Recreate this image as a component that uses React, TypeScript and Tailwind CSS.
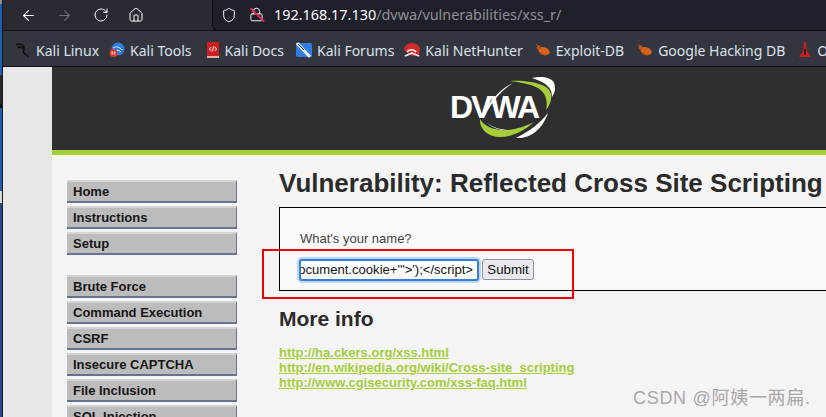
import { ArrowLeft, ArrowRight, RotateCw, Home, Shield, Lock } from 'lucide-react'

const menuTop = ['Home', 'Instructions', 'Setup']
const menuVulns = ['Brute Force', 'Command Execution', 'CSRF', 'Insecure CAPTCHA', 'File Inclusion', 'SQL Injection']

function Bug() {
  return (
    <svg width="16" height="14" viewBox="0 0 16 14" className="shrink-0">
      <ellipse cx="9" cy="8" rx="6" ry="3.6" fill="#d9631e" transform="rotate(20 9 8)" />
      <circle cx="3.5" cy="4.5" r="2" fill="#b9501a" />
      <path d="M1 1l3 3M5 2l-1 2M6 12l1-3M10 13l0-3" stroke="#b9501a" strokeWidth="1" />
    </svg>
  )
}

function Bookmark({ icon, label, gap }: { icon: React.ReactNode; label: string; gap: string }) {
  return (
    <div className={`flex items-center gap-[5px] ${gap}`}>
      {icon}
      <span className="whitespace-nowrap">{label}</span>
    </div>
  )
}

function MenuItem({ label }: { label: string }) {
  return (
    <div className="h-[23px] mb-[3px] bg-[#bcbcbc] border-t-2 border-t-[#d4d4d4] border-b-2 border-b-[#68748f] border-r border-r-[#68748f] pl-[6px] text-[13px] font-bold leading-[19px] text-[#161616]">
      {label}
    </div>
  )
}

export default function App() {
  return (
    <div className="relative h-[417px] w-[826px] overflow-hidden flex bg-[#e7e7e7] font-['Liberation_Sans',sans-serif]">
      {/* Desktop peeking out on the left */}
      <div className="w-[3px] shrink-0 flex flex-col border-r border-r-[#1a1a1e]">
        <div className="h-[4px] bg-[#8f8f8f]" />
        <div className="h-[71px] bg-[#1f5fb0]" />
        <div className="h-[29px] bg-[#2a2a2e]" />
        <div className="h-[4px] bg-[#050505]" />
        <div className="h-[83px] bg-[#1f5cae]" />
        <div className="h-[12px] bg-[#d8d8d8]" />
        <div className="flex-1 bg-[#27478f]" />
      </div>

      <div className="flex-1 min-w-0 flex flex-col">
        {/* Browser toolbar */}
        <div className="h-[31px] shrink-0 bg-[#2b2a33] flex items-center pl-[17px] text-[#fbfbfe] border-b border-b-[#16161a]">
          <ArrowLeft size={17} strokeWidth={1.5} />
          <ArrowRight size={17} strokeWidth={1.5} className="ml-[19px] text-[#6f6e76]" />
          <RotateCw size={16} strokeWidth={1.5} className="ml-[20px]" />
          <Home size={16} strokeWidth={1.5} className="ml-[19px]" />
          <div className="ml-[68px] h-[31px] flex-1 rounded-bl-md bg-[#20202a] border-l border-b border-[#0d0d10] flex items-center pl-[8px] font-['Noto_Sans',sans-serif] text-[14.4px]">
            <Shield size={16} strokeWidth={1.5} />
            <div className="relative ml-[12px] mr-[10px]">
              <Lock size={15} strokeWidth={1.5} />
              <div className="absolute left-[-1px] top-[7px] w-[19px] h-[1.5px] bg-[#e0315a] rotate-45" />
            </div>
            <span className="text-[#fbfbfe]">192.168.17.130</span>
            <span className="text-[#8f8f96]">/dvwa/vulnerabilities/xss_r/</span>
          </div>
        </div>

        {/* Bookmarks */}
        <div className="h-[36px] shrink-0 bg-[#33363f] border-b border-b-[#111114] flex items-center pt-[3px] pl-[12px] text-[14px] text-[#dbe1ea] font-['Noto_Sans',sans-serif] whitespace-nowrap overflow-hidden">
          <Bookmark
            gap="mr-[10px]"
            label="Kali Linux"
            icon={
              <svg width="16" height="16" viewBox="0 0 16 16" className="shrink-0">
                <path d="M1 3c3-2 7-1 8 2s-2 4 0 6l5 4M3 6c2-2 5-1 5 1" stroke="#0c0c0c" strokeWidth="1.5" fill="none" />
              </svg>
            }
          />
          <Bookmark
            gap="mr-[14px]"
            label="Kali Tools"
            icon={
              <svg width="16" height="16" viewBox="0 0 16 16" className="shrink-0">
                <circle cx="9" cy="7" r="6.5" fill="#2f7fe0" />
                <path d="M4 6c3-2 7-1 9 2M6 9c2-1 4-1 6 1" stroke="#cfe4fb" strokeWidth="1" fill="none" />
                <circle cx="4.5" cy="11" r="4" fill="#e23a2e" />
                <path d="M3.2 9.5v3M5.6 9.5v3" stroke="#fff" strokeWidth="1" />
              </svg>
            }
          />
          <Bookmark
            gap="mr-[12px]"
            label="Kali Docs"
            icon={
              <svg width="14" height="16" viewBox="0 0 14 16" className="shrink-0">
                <rect x="1" y="0" width="12" height="14" fill="#d01f1f" />
                <rect x="1" y="14" width="12" height="2" fill="#e3b0a8" />
                <path d="M5 5L3.5 7 5 9M9 5l1.5 2L9 9M7.8 4.5L6.2 9.5" stroke="#fff" strokeWidth="1" fill="none" />
              </svg>
            }
          />
          <Bookmark
            gap="mr-[10px]"
            label="Kali Forums"
            icon={
              <svg width="16" height="16" viewBox="0 0 16 16" className="shrink-0">
                <rect x="0" y="1" width="16" height="14" rx="1.5" fill="#2f7fe0" />
                <path d="M1 1l13 14" stroke="#e8ecf2" strokeWidth="3" />
                <path d="M2 2l6 6" stroke="#33363f" strokeWidth="1" />
              </svg>
            }
          />
          <Bookmark
            gap="mr-[12px]"
            label="Kali NetHunter"
            icon={
              <svg width="16" height="16" viewBox="0 0 16 16" className="shrink-0">
                <path d="M0 8a8 7 0 0 1 16 0l-1 6H8z" fill="#d42a2a" />
                <path d="M3 10a5 4 0 0 1 9 0M1 14l7-3 7 3" stroke="#fff" strokeWidth="1.5" fill="none" />
              </svg>
            }
          />
          <Bookmark gap="mr-[13px]" label="Exploit-DB" icon={<Bug />} />
          <Bookmark gap="mr-[13px]" label="Google Hacking DB" icon={<Bug />} />
          <Bookmark
            gap=""
            label="OffSec"
            icon={
              <svg width="14" height="16" viewBox="0 0 14 16" className="shrink-0">
                <path d="M6 0h2l1 9 4 6H1l4-6z" fill="#c8201f" />
                <rect x="6" y="7" width="2" height="6" fill="#4a0d0d" />
              </svg>
            }
          />
        </div>

        {/* Page */}
        <div className="flex-1 flex min-h-0">
          <div className="w-[49px] shrink-0 bg-[#e7e7e7]" />
          <div className="flex-1 min-w-0 flex flex-col bg-[#f4f4f4]">
            <div className="h-[83px] shrink-0 bg-[#2f2f2f] pl-[398px] pt-[10px]">
              <div className="relative w-[106px] h-[62px]">
                <svg width="106" height="62" viewBox="0 0 106 62" className="absolute left-0 top-0">
                  <path d="M60 4C72 3 88 5 96 10C103 15 103 24 96 33C98 24 96 16 88 11C80 7 70 5 60 4z" fill="#a6ce39" />
                  <path d="M30 42C29 52 38 60 50 60C62 60 74 54 84 45C74 50 62 54 50 53C42 52 34 49 30 42z" fill="#a6ce39" />
                  <path d="M82 1C90 -1 102 0 104 6C106 11 105 15 102 20C102 12 98 6 82 1z" fill="#fff" />
                  <path d="M66 61C84 62 94 48 98 36C90 46 80 54 66 61z" fill="#fff" />
                  <path d="M33 37C40 24 50 12 63 6C52 13 42 24 35 39z" fill="#fff" />
                  <path d="M37 46C44 51 52 53 60 53C52 54 44 52 37 46z" fill="#fff" />
                </svg>
                <span className="absolute left-0 top-[10px] text-[32px] leading-[40px] font-bold tracking-[-2px] text-white">DVWA</span>
              </div>
            </div>
            <div className="h-[5px] shrink-0 bg-[#a6ce39]" />

            <div className="flex min-h-0 flex-1 pl-[15px] overflow-hidden">
              {/* Side menu */}
              <div className="w-[170px] shrink-0 pt-[25px]">
                {menuTop.map((m) => (
                  <MenuItem key={m} label={m} />
                ))}
                <div className="h-[17px]" />
                {menuVulns.map((m) => (
                  <MenuItem key={m} label={m} />
                ))}
              </div>

              {/* Content */}
              <div className="ml-[42px] flex-1 min-w-0 text-[#222]">
                <h1 className="mt-[13px] h-[30px] whitespace-nowrap text-[26px] leading-[30px] font-bold text-[#2b2b2b]">
                  Vulnerability: Reflected Cross Site Scripting (XSS)
                </h1>
                <div className="mt-[9px] h-[84px] -mr-px border border-black bg-[#f9f9f9] pl-[20px] pt-[23px]">
                  <div className="text-[13px] leading-[15px] text-[#444]">What's your name?</div>
                  <div className="mt-[13px] flex items-start">
                    <div className="-ml-px h-[22px] w-[180px] rounded-[3px] border-2 border-[#3a7fd5] bg-white shadow-[0_0_0_2px_#b9d9f7] overflow-hidden flex justify-end items-center pr-[4px] text-[13.1px] text-[#111] whitespace-nowrap">
                      document.cookie+'"&gt;');&lt;/script&gt;
                    </div>
                    <button className="ml-[3px] h-[21px] w-[52px] rounded-[3px] border border-[#8f8f9d] bg-[#e9e9ed] text-[13.3px] leading-[17px] text-[#111]">
                      Submit
                    </button>
                  </div>
                </div>
                <h2 className="mt-[16px] text-[21px] leading-[24px] font-bold text-[#2b2b2b]">More info</h2>
                <div className="mt-[14px] text-[13px] leading-[15px] font-bold text-[#a6ce39] underline">
                  <div>http://ha.ckers.org/xss.html</div>
                  <div>http://en.wikipedia.org/wiki/Cross-site_scripting</div>
                  <div>http://www.cgisecurity.com/xss-faq.html</div>
                </div>
              </div>
            </div>
          </div>
        </div>
      </div>

      {/* Red annotation drawn over the screenshot */}
      <div className="absolute left-[262px] top-[249px] h-[50px] w-[312px] border-2 border-[#f00000]" />
      {/* CSDN watermark */}
      <div className="absolute left-[633px] top-[388px] text-[18px] leading-[20px] tracking-[0.7px] text-[#a8a8a8] whitespace-nowrap font-['Liberation_Sans','Noto_Sans_CJK_SC',sans-serif]">
        CSDN @阿姨一两扁.
      </div>
    </div>
  )
}
